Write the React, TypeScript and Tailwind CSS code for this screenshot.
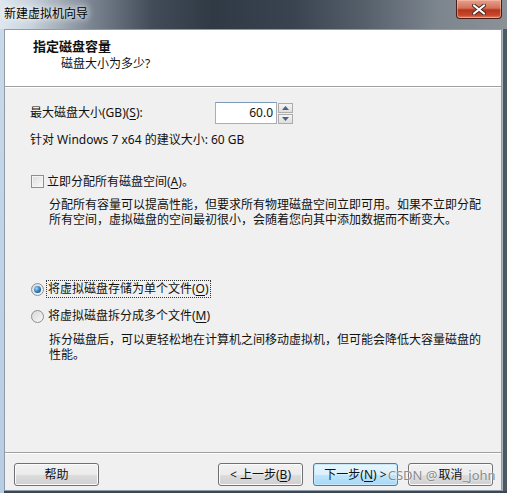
import React from 'react';

const U = ({ children }: { children: React.ReactNode }) => <span className="underline underline-offset-2">{children}</span>;

const WinButton = ({ children, primary = false }: { children: React.ReactNode; primary?: boolean }) => (
  <button
    className={
      'relative w-[85px] h-[23px] rounded-[3px] border text-[12px] leading-none flex items-center justify-center text-[#111] ' +
      (primary
        ? 'border-[#3c7fb1] bg-[linear-gradient(to_bottom,#eaf6fd_0%,#d9f0fc_50%,#bee6fd_51%,#a7d9f5_100%)] shadow-[inset_0_0_0_1px_#c8e8fa]'
        : 'border-[#707070] bg-[linear-gradient(to_bottom,#f2f2f2_0%,#ebebeb_50%,#dddddd_51%,#cfcfcf_100%)] shadow-[inset_0_0_0_1px_#fcfcfc]')
    }
  >
    {children}
  </button>
);

const Radio = ({ checked }: { checked?: boolean }) => (
  <span className="w-[13px] h-[13px] rounded-full border border-[#8e8f8f] bg-[linear-gradient(135deg,#d8d8d8,#f8f8f8)] flex items-center justify-center shrink-0">
    {checked && (
      <span className="w-[7px] h-[7px] rounded-full bg-[radial-gradient(circle_at_35%_35%,#9fd3f7,#1f6fb5_60%,#0d4b8a)]" />
    )}
  </span>
);

export default function App() {
  return (
    <div className="w-[507px] h-[493px] flex flex-col bg-[#5a646e] font-['Noto_Sans','Noto_Sans_CJK_SC',sans-serif] text-[12px] text-[#111] select-none">
      {/* title bar */}
      <div className="relative h-[29px] shrink-0 bg-[linear-gradient(to_right,#dfe7ef_0%,#c9d3dd_6%,#7a8591_18%,#414c58_30%,#303a45_42%,#3a4450_58%,#56606b_72%,#7c858e_86%,#8b9197_100%)]">
        <span className="absolute left-[4px] top-[6px] leading-[16px] text-[12px] text-black [text-shadow:0_0_6px_#fff,0_0_10px_#fff]">
          新建虚拟机向导
        </span>
        <div className="absolute right-[5px] top-0 w-[46px] h-[19px] rounded-b-[4px] border border-t-0 border-[#4a1e16] bg-[linear-gradient(to_bottom,#e6a18f_0%,#d2715a_45%,#b8351b_55%,#c8472c_85%,#e08a6a_100%)] flex items-center justify-center shadow-[inset_0_0_0_1px_rgba(255,200,180,0.5)]">
          <svg width="14" height="11" viewBox="0 0 14 11">
            <path d="M2 1.5 L12 9.5 M12 1.5 L2 9.5" stroke="#4a2a24" strokeWidth="4" strokeLinecap="round" />
            <path d="M2 1.5 L12 9.5 M12 1.5 L2 9.5" stroke="#ffffff" strokeWidth="2.2" strokeLinecap="round" />
          </svg>
        </div>
      </div>

      <div className="flex flex-1 min-h-0">
        <div className="w-[4px] bg-[linear-gradient(to_bottom,#c9d9ea,#b7cde4)] shrink-0" />
        <div className="flex-1 flex flex-col border border-[#8f9ba7] bg-[#f0f0f0]">
          {/* header */}
          <div className="h-[56px] bg-white pl-[28px] pt-[9px] shrink-0">
            <div className="text-[13px] font-bold leading-[15px]">指定磁盘容量</div>
            <div className="pl-[28px] mt-[2px] leading-[15px]">磁盘大小为多少?</div>
          </div>
          <div className="h-px bg-[#a0a0a0]" />
          <div className="h-px bg-white" />

          {/* body */}
          <div className="pl-[25px] pr-[16px] flex flex-col">
            <div className="mt-[14px] flex items-center h-[22px]">
              <span className="w-[185px]">
                最大磁盘大小(GB)(<U>S</U>):
              </span>
              <div className="w-[62px] h-[22px] border border-[#abadb3] border-t-[#7d9ab8] bg-white flex items-center justify-end pr-[3px] text-[12px]">
                60.0
              </div>
              <div className="ml-[1px] flex flex-col gap-[1px]">
                <div className="w-[15px] h-[10px] border border-[#acacac] bg-[linear-gradient(to_bottom,#f4f4f4,#dedede)] flex items-center justify-center">
                  <svg width="7" height="4" viewBox="0 0 7 4"><path d="M3.5 0 L7 4 L0 4Z" fill="#4d6185" /></svg>
                </div>
                <div className="w-[15px] h-[10px] border border-[#acacac] bg-[linear-gradient(to_bottom,#f4f4f4,#dedede)] flex items-center justify-center">
                  <svg width="7" height="4" viewBox="0 0 7 4"><path d="M0 0 L7 0 L3.5 4Z" fill="#4d6185" /></svg>
                </div>
              </div>
            </div>

            <div className="mt-[8px] leading-[15px]">针对 Windows 7 x64 的建议大小: 60 GB</div>

            <div className="mt-[27px] flex items-center leading-[15px]">
              <span className="w-[13px] h-[13px] border border-[#8e8f8f] bg-[linear-gradient(135deg,#dcdcdc,#fafafa)] shadow-[inset_0_0_0_1px_#f4f4f4] ml-[1px] mr-[3px] shrink-0" />
              <span>
                立即分配所有磁盘空间(<U>A</U>)。
              </span>
            </div>

            <p className="mt-[8px] pl-[19px] leading-[15px]">
              分配所有容量可以提高性能，但要求所有物理磁盘空间立即可用。如果不立即分配所有空间，虚拟磁盘的空间最初很小，会随着您向其中添加数据而不断变大。
            </p>

            <div className="mt-[53px] flex items-center h-[18px]">
              <span className="ml-[1px]"><Radio checked /></span>
              <span className="ml-[2px] px-[1px] h-[18px] flex items-center border border-dotted border-[#333]">
                将虚拟磁盘存储为单个文件(<U>O</U>)
              </span>
            </div>

            <div className="mt-[9px] flex items-center h-[18px]">
              <span className="ml-[1px]"><Radio /></span>
              <span className="ml-[3px] px-[1px]">
                将虚拟磁盘拆分成多个文件(<U>M</U>)
              </span>
            </div>

            <p className="mt-[7px] pl-[19px] leading-[15px]">
              拆分磁盘后，可以更轻松地在计算机之间移动虚拟机，但可能会降低大容量磁盘的性能。
            </p>
          </div>

          <div className="flex-1" />
          <div className="h-px bg-[#a0a0a0]" />
          <div className="h-px bg-white" />

          {/* buttons */}
          <div className="flex items-center pl-[9px] pr-[8px] pt-[9px] pb-[4px]">
            <WinButton>帮助</WinButton>
            <div className="flex-1" />
            <WinButton>
              &lt; 上一步(<U>B</U>)
            </WinButton>
            <div className="w-[10px]" />
            <WinButton primary>
              下一步(<U>N</U>) &gt;
            </WinButton>
            <div className="w-[10px]" />
            <WinButton>
              <span className="relative">
                <span className="absolute right-full top-1/2 -translate-y-1/2 pr-[1px] whitespace-nowrap text-[13px] text-[#8c8c8c] [text-shadow:0_0_2px_#fff] pointer-events-none">
                  CSDN @
                </span>
                取消
                <span className="absolute left-full top-1/2 -translate-y-1/2 whitespace-nowrap text-[13px] text-[#8c8c8c] [text-shadow:0_0_2px_#fff] pointer-events-none">
                  _john
                </span>
              </span>
            </WinButton>
          </div>
        </div>
        <div className="w-[5px] bg-[linear-gradient(to_right,#aab6c2_0,#aab6c2_1px,#4f5964_1px)] shrink-0" />
      </div>
      <div className="h-[2px] bg-[linear-gradient(to_right,#b7cde4_0,#b7cde4_4px,#3d4752_4px)] shrink-0" />
    </div>
  );
}
